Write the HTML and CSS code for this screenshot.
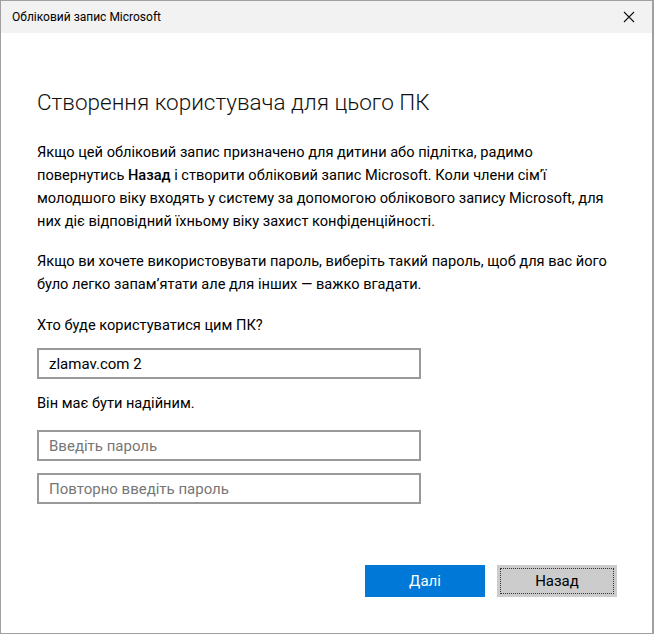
FILE: index.html
```html
<!DOCTYPE html>
<html lang="uk">
<head>
    <meta charset="UTF-8">
    <meta name="viewport" content="width=device-width, initial-scale=1.0">
    <title>Обліковий запис Microsoft</title>
    <link rel="stylesheet" href="styles.css">
</head>
<body>
    <div class="window">
        <div class="titlebar">
            <span class="title">Обліковий запис Microsoft</span>
            <svg class="close" width="12" height="12" viewBox="0 0 12 12">
                <path d="M1 1 L11 11 M11 1 L1 11" stroke="#111" stroke-width="1.1" fill="none"/>
            </svg>
        </div>
        <div class="content">
            <h1 class="heading">Створення користувача для цього ПК</h1>
            <p class="text">Якщо цей обліковий запис призначено для дитини або підлітка, радимо повернутись <b>Назад</b> і створити обліковий запис Microsoft. Коли члени сім’ї молодшого віку входять у систему за допомогою облікового запису Microsoft, для них діє відповідний їхньому віку захист конфіденційності.</p>
            <p class="text">Якщо ви хочете використовувати пароль, виберіть такий пароль, щоб для вас його було легко запам’ятати але для інших — важко вгадати.</p>
            <label class="label">Хто буде користуватися цим ПК?</label>
            <input class="field" type="text" value="zlamav.com 2">
            <label class="label pass-label">Він має бути надійним.</label>
            <input class="field" type="password" placeholder="Введіть пароль">
            <input class="field" type="password" placeholder="Повторно введіть пароль">
        </div>
        <div class="buttons">
            <button class="btn primary">Далі</button>
            <button class="btn secondary"><span class="focus">Назад</span></button>
        </div>
    </div>
</body>
</html>
```

FILE: styles.css
```css
*{
    padding: 0;
    margin: 0;
    box-sizing: border-box;
}
body{
    font-family: Roboto, "Noto Sans", sans-serif;
    color: #000;
    background: #fff;
}
.window{
    width: 654px;
    height: 634px;
    border: 1px solid #a0a0a0;
    border-right-width: 2px;
    display: flex;
    flex-direction: column;
}
.titlebar{
    height: 32px;
    background: #f2f2f2;
    display: flex;
    align-items: center;
    justify-content: space-between;
    padding: 0 17px 0 11px;
}
.title{
    font-size: 12px;
}
.content{
    padding: 51px 36px 0 36px;
    display: flex;
    flex-direction: column;
}
.heading{
    font-size: 22.5px;
    font-weight: 300;
    color: #111;
    line-height: 36px;
    margin-bottom: 21px;
}
.text{
    font-size: 14.6px;
    line-height: 23px;
    width: 578px;
    margin-bottom: 17px;
}
.text b{
    font-weight: 500;
}
.label{
    font-size: 14.6px;
    line-height: 23px;
    margin-top: 1px;
    margin-bottom: 11px;
}
.pass-label{
    margin-bottom: 15px;
}
.field{
    width: 384px;
    height: 31px;
    border: 2px solid #999;
    padding: 0 10px;
    font-family: inherit;
    font-size: 15px;
    color: #000;
    margin-bottom: 12px;
    outline: none;
}
.field::placeholder{
    color: #767676;
}
.buttons{
    margin-top: auto;
    margin-bottom: 36px;
    display: flex;
    justify-content: flex-end;
    gap: 12px;
    padding-right: 35px;
}
.btn{
    width: 120px;
    height: 32px;
    border: none;
    font-family: inherit;
    font-size: 15px;
}
.primary{
    background: #0078d7;
    color: #fff;
}
.secondary{
    background: #cccccc;
    color: #000;
    padding: 3px;
}
.focus{
    display: flex;
    align-items: center;
    justify-content: center;
    height: 100%;
    border: 1px dotted #333;
}
```
